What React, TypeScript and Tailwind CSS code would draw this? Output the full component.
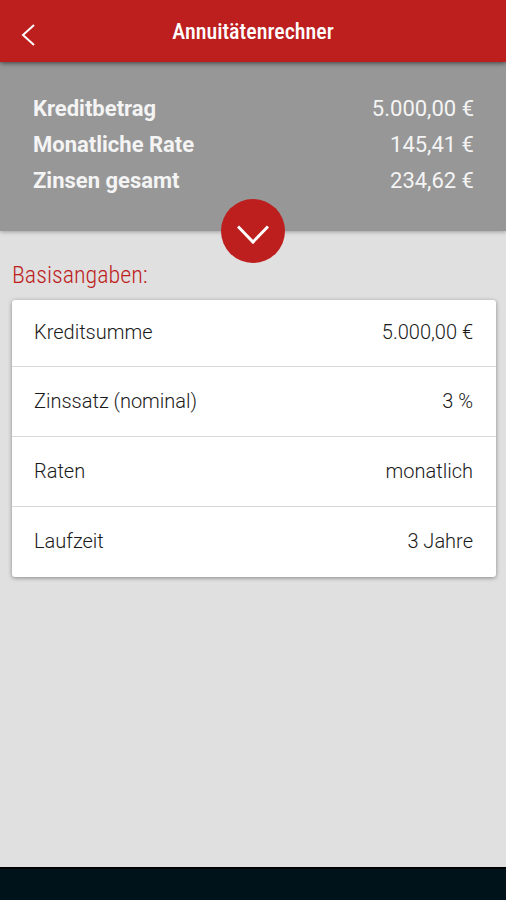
interface Entry {
  label: string;
  value: string;
}

const summary: Entry[] = [
  { label: "Kreditbetrag", value: "5.000,00 €" },
  { label: "Monatliche Rate", value: "145,41 €" },
  { label: "Zinsen gesamt", value: "234,62 €" },
];

const inputs: Entry[] = [
  { label: "Kreditsumme", value: "5.000,00 €" },
  { label: "Zinssatz (nominal)", value: "3 %" },
  { label: "Raten", value: "monatlich" },
  { label: "Laufzeit", value: "3 Jahre" },
];

function Header() {
  return (
    <header className="relative z-10 grid grid-cols-[56px_1fr_56px] items-center h-[62px] bg-[#bd1e1e] text-white shadow-[0_1px_5px_rgba(0,0,0,0.6)]">
      <button aria-label="Zurück" className="flex items-center justify-center h-full pt-2">
        <svg width="14" height="22" viewBox="0 0 14 22" fill="none" stroke="currentColor" strokeWidth="2">
          <path d="M13 1 2 11l11 10" />
        </svg>
      </button>
      <h1 className="text-center text-[22px] font-medium font-['Roboto_Condensed','Roboto',sans-serif]">
        Annuitätenrechner
      </h1>
    </header>
  );
}

function Summary() {
  return (
    <section className="relative h-[169px] pl-[33px] pr-8 pt-[29px] bg-[#979797] text-[#f4f4f4] shadow-[0_1px_4px_rgba(0,0,0,0.3)]">
      <dl>
        {summary.map((item) => (
          <div key={item.label} className="flex justify-between text-[22px] leading-[36px]">
            <dt className="font-bold">{item.label}</dt>
            <dd>{item.value}</dd>
          </div>
        ))}
      </dl>
      {/* Toggle sits on the lower edge of the panel */}
      <button
        aria-label="Details anzeigen"
        className="absolute left-1/2 bottom-0 -translate-x-1/2 translate-y-1/2 flex items-center justify-center size-16 rounded-full bg-[#bd1e1e] text-white"
      >
        <svg width="32" height="20" viewBox="0 0 32 20" fill="none" stroke="currentColor" strokeWidth="3" className="mt-2">
          <path d="M1 1.5 16 17 31 1.5" />
        </svg>
      </button>
    </section>
  );
}

function BaseData() {
  return (
    <section className="pl-3 pr-[10px] pt-7">
      <h2 className="text-[24px] leading-[33px] font-light text-[#bd1e1e] font-['Roboto_Condensed','Roboto',sans-serif]">
        Basisangaben:
      </h2>
      <ul className="mt-2 rounded-[3px] bg-white text-[#1a1a1a] shadow-[0_1px_4px_rgba(0,0,0,0.4)] divide-y divide-[#d8d8d8]">
        {inputs.map((item) => (
          <li key={item.label} className="flex h-[70px] first:h-[67px]">
            <button className="flex items-center justify-between w-full pl-[22px] pr-[23px] pb-[2px] text-[20px] font-light">
              <span>{item.label}</span>
              <span>{item.value}</span>
            </button>
          </li>
        ))}
      </ul>
    </section>
  );
}

export default function App() {
  return (
    <div className="flex flex-col min-h-screen bg-[#e0e0e0] font-['Roboto',sans-serif]">
      <Header />
      <main className="flex-1">
        <Summary />
        <BaseData />
      </main>
      <footer className="h-[33px] bg-[#00131a] border-t-2 border-black" />
    </div>
  );
}
